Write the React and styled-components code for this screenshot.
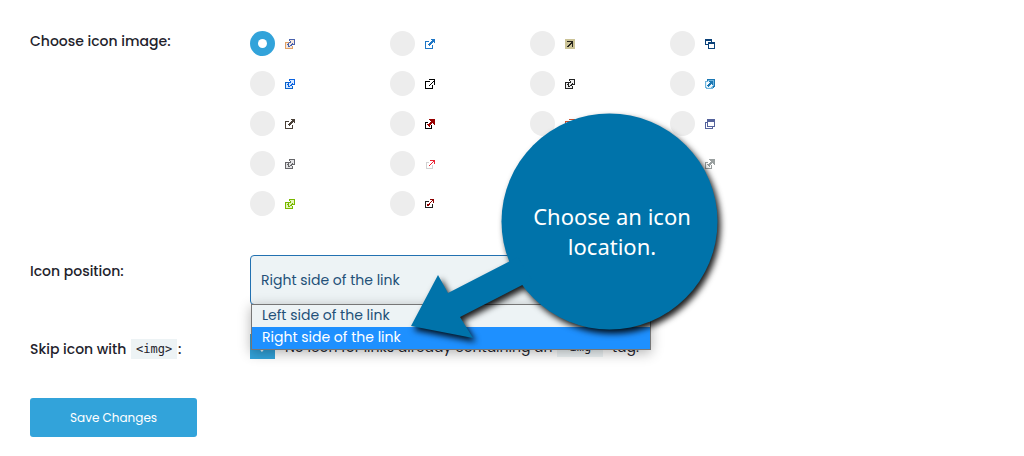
import React, { useState } from 'react';
import styled, { createGlobalStyle } from 'styled-components';

const GlobalStyle = createGlobalStyle`
  * { box-sizing: border-box; }
  body {
    margin: 0; background-color: #fff; color: #23222b;
    font-family: Poppins, Inter, "Liberation Sans", sans-serif;
    font-size: 14px; line-height: 20px;
  }
`

const Page = styled.main`
  position: relative; padding: 31px 30px 19px; overflow: hidden;
`

const Form = styled.form`
  display: flex; flex-direction: column; align-items: stretch;
`

const Row = styled.div`
  display: grid; grid-template-columns: 220px 1fr; margin-bottom: ${props => props.$gap}px;
`

const Title = styled.div`
  padding-top: ${props => props.$top || 0}px; font-size: 14px; font-weight: 500;
`

const Code = styled.code`
  display: inline-block; vertical-align: top; height: 20px; padding: 0 5px; margin: 0 1px;
  background-color: #edf3f5; font-family: "DejaVu Sans Mono", monospace;
  font-size: 12px; line-height: 20px; font-weight: 400;
`

const IconGrid = styled.div`
  display: grid; grid-template-columns: repeat(4, 140px); row-gap: 15px;
`

const IconOption = styled.label`
  display: flex; align-items: center; gap: 10px; height: 25px;
`

const Radio = styled.input`
  appearance: none; display: grid; place-items: center;
  width: 25px; height: 25px; margin: 0; border-radius: 50%; background-color: #ededed;
  &:checked { background-color: #32a3da; }
  &:checked::before {
    content: ''; width: 9px; height: 9px; border-radius: 50%; background-color: #fff;
  }
`

const Picker = styled.div`
  position: relative; width: 100%; max-width: 400px;
`

const Select = styled.select`
  appearance: none; display: block; width: 100%; height: 50px; padding: 0 10px;
  border: 1px solid #2271b1; border-radius: 4px; outline: none;
  background-color: #edf3f5; color: #235078; font: inherit;
`

const Options = styled.ul`
  position: absolute; z-index: 1; top: 49px; left: 1px; width: 100%; margin: 0; padding: 0;
  list-style: none; border: 1px solid #767676; background-color: #edf3f5;
  box-shadow: 0 3px 12px rgba(0, 0, 0, .3);
`

const Option = styled.li`
  height: 22px; padding: 0 10px; line-height: 20px; cursor: default;
  color: ${props => props.$active ? '#fff' : '#235078'};
  background-color: ${props => props.$active ? '#1e90ff' : 'transparent'};
`

const CheckLabel = styled.label`
  display: flex; align-items: center; gap: 10px; height: 25px; white-space: pre;
`

const Checkbox = styled.input`
  appearance: none; display: grid; place-items: center;
  width: 25px; height: 25px; margin: 0; background-color: #ededed;
  &:checked { background-color: #32a3da; }
  &:checked::before {
    content: ''; width: 5px; height: 8px; border: solid #fff;
    border-width: 0 1px 1px 0; transform: rotate(45deg);
  }
`

const Button = styled.button`
  align-self: flex-start; height: 39px; padding: 0 40px; border: none; border-radius: 3px;
  background-color: #32a3da; color: #fff; font: inherit; font-size: 12px; cursor: pointer;
`

const Callout = styled.div`
  position: absolute; z-index: 2; left: 400px; top: 100px; width: 340px; height: 250px;
  pointer-events: none;
`

const CalloutShape = styled.svg`
  display: block; overflow: visible;
  filter: drop-shadow(3px 4px 3px rgba(0, 0, 0, .9));
`

const CalloutText = styled.p`
  position: absolute; left: 102px; top: 101px; width: 220px; margin: 0;
  color: #fff; text-align: center; font-family: "Noto Sans", "Open Sans", sans-serif;
  font-size: 22px; line-height: 30px;
`

// 10x10 pixel icons, one letter per colour
const SHAPES = {
  outline: [
    '....aaaaaa',
    '....acccca',
    '.....accca',
    'bbbbaaccca',
    'bccacccaca',
    'bcaaccaaaa',
    'bccacaa...',
    'bccaaccb..',
    'bccccccb..',
    'bbbbbbbb..',
  ],
  solid: [
    '......aaaa',
    '.......aaa',
    'bbbb..aaaa',
    'b....aaa.a',
    'b...aaa...',
    'b..aaa....',
    'b...a..b..',
    'b......b..',
    'b......b..',
    'bbbbbbbb..',
  ],
  thin: [
    '....aaaaaa',
    '.........a',
    'bbbbb...aa',
    'b......a.a',
    'b.....a..a',
    'b....a...a',
    'b...a..b..',
    'b......b..',
    'b......b..',
    'bbbbbbbb..',
  ],
  heavy: [
    '....aaaaaa',
    '.....aaaaa',
    '......aaaa',
    'bbb..aaaaa',
    'b...aaa.aa',
    'b.aaaa...a',
    'b..aa.b...',
    'b...a.b...',
    'b.....b...',
    'bbbbbbb...',
  ],
  faint: [
    '..........',
    '.....aaaaa',
    '........aa',
    '.bbb...a.a',
    '.b....a..a',
    '.b...a....',
    '.b..a..b..',
    '.b.....b..',
    '.b.....b..',
    '.bbbbbbb..',
  ],
  small: [
    '.....aaaa.',
    '.......aa.',
    'bbbb..a.a.',
    'b....a..a.',
    'b...a.....',
    'b.aaa..b..',
    'b.aa...b..',
    'b......b..',
    'bbbbbbbb..',
    '..........',
  ],
  badge: [
    'bbbbbbbbbb',
    'bbbbbbbbbb',
    'bbaaaaaabb',
    'bbbbbbaabb',
    'bbbbbaaabb',
    'bbbbaababb',
    'bbbaabbabb',
    'bbaabbbabb',
    'bbbbbbbbbb',
    'bbbbbbbbbb',
  ],
  windows: [
    'aaaaaaa...',
    'aaaaaaa...',
    'a.....a...',
    'a..aaaaaaa',
    'a..aaaaaaa',
    'aaaa.....a',
    '...a.....a',
    '...a.....a',
    '...a.....a',
    '...aaaaaaa',
  ],
  stacked: [
    '..aaaaaaaa',
    '..aaaaaaaa',
    '..aaaaaaaa',
    'aaa......a',
    'a.a......a',
    'a.a......a',
    'a.a......a',
    'a.aaaaaaaa',
    'a......a..',
    'aaaaaaaa..',
  ],
  framed: [
    '..aaaaaaaa',
    '..abbbbbba',
    'bbbcaaaaba',
    'bc.ccaaaba',
    'bc..aaaaba',
    'bc.aaacaba',
    'bcaaac.cba',
    'bccacccbaa',
    'bbccccbba.',
    '.bbbbbbb..',
  ],
}

const ICONS = [
  ['outline', '#4a62ad', '#e0a066', '#f4e6dc'],
  ['solid', '#1f77c6', '#1f77c6'],
  ['badge', '#26241c', '#cbc397'],
  ['windows', '#0b4279'],
  ['outline', '#0b63e0', '#0b63c8', '#d6e8ff'],
  ['thin', '#000', '#000'],
  ['outline', '#222', '#222', '#eee'],
  ['framed', '#1c78b4', '#6fb4dc', '#e4f2fa'],
  ['solid', '#4a4038', '#4a4038'],
  ['heavy', '#980000', '#000'],
  ['thin', '#d0502c', '#d0502c'],
  ['stacked', '#55639c'],
  ['outline', '#666669', '#666669', '#e2e2e4'],
  ['faint', '#ea2536', '#d2d2d2'],
  ['outline', '#888', '#888', '#eee'],
  ['heavy', '#9aa0a0', '#9aa0a0'],
  ['outline', '#79b800', '#79b800', '#e4f5bc'],
  ['small', '#8b0000', '#222'],
  ['thin', '#333', '#333'],
  ['thin', '#1d5f78', '#1d5f78'],
]

const LinkIcon = ({ icon }) => {
  const [shape, a, b, c] = icon;
  const colors = { a, b, c };
  return (
    <svg width="10" height="11" viewBox="0 -1 10 11" shapeRendering="crispEdges" aria-hidden="true">
      {
        SHAPES[shape].map((line, y) => [...line].map((key, x) => (
          colors[key] && <rect key={`${x}-${y}`} x={x} y={y} width="1" height="1" fill={colors[key]} />
        )))
      }
    </svg>
  )
}

const App = () => {
  const [icon, setIcon] = useState(0);
  const [position, setPosition] = useState('Right');
  const [skip, setSkip] = useState(true);

  return (
    <Page>
      <GlobalStyle />
      <Form onSubmit={e => e.preventDefault()}>
        <Row $gap={39}>
          <Title id="icon-title">Choose icon image:</Title>
          <IconGrid role="radiogroup" aria-labelledby="icon-title">
            {
              ICONS.map((item, i) => (
                <IconOption key={i}>
                  <Radio
                    type="radio" name="icon" aria-label={`Icon ${i + 1}`}
                    checked={icon === i} onChange={() => setIcon(i)}
                  />
                  <LinkIcon icon={item} />
                </IconOption>
              ))
            }
          </IconGrid>
        </Row>
        <Row $gap={29}>
          <Title as="label" htmlFor="position" $top={6}>Icon position:</Title>
          <Picker>
            <Select id="position" value={position} onChange={e => setPosition(e.target.value)}>
              <option value="Left">Left side of the link</option>
              <option value="Right">Right side of the link</option>
            </Select>
            <Options role="listbox" aria-label="Icon position">
              {
                ['Left', 'Right'].map(side => (
                  <Option
                    key={side} role="option" aria-selected={position === side}
                    $active={position === side} onClick={() => setPosition(side)}
                  >
                    {side} side of the link
                  </Option>
                ))
              }
            </Options>
          </Picker>
        </Row>
        <Row $gap={39}>
          <Title as="label" htmlFor="skip" $top={5}>Skip icon with <Code>&lt;img&gt;</Code>:</Title>
          <CheckLabel>
            <Checkbox id="skip" type="checkbox" checked={skip} onChange={e => setSkip(e.target.checked)} />
            <span>No icon for links already containing an <Code>&lt;img&gt;</Code>  tag.</span>
          </CheckLabel>
        </Row>
        <Button type="submit">Save Changes</Button>
      </Form>
      <Callout>
        <CalloutShape width="340" height="250" viewBox="0 0 340 250" aria-hidden="true">
          <circle cx="209.5" cy="121.5" r="108" fill="#0073aa" />
          <path d="M11 226 L38 175 L48 193 L118 157 L132 180 L60 217 L73 238 Z" fill="#0073aa" />
        </CalloutShape>
        <CalloutText>Choose an icon<br />location.</CalloutText>
      </Callout>
    </Page>
  )
}

export default App;
